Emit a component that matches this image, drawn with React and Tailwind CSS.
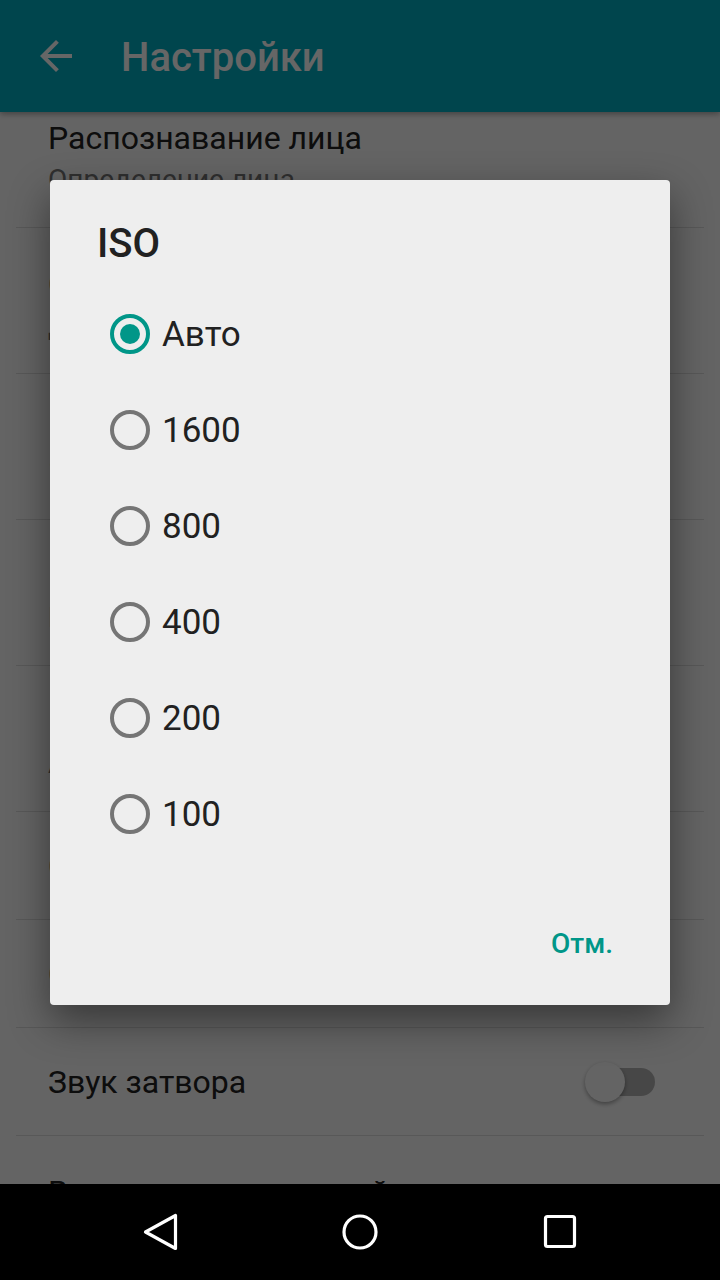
import React from "react";

function Switch() {
  return (
    <div className="relative w-[70px] h-[40px] flex items-center">
      <div className="ml-[2px] w-[68px] h-[28px] rounded-full bg-[#b2b2b2]" />
      <div className="absolute left-0 top-0 w-[40px] h-[40px] rounded-full bg-[#fafafa] shadow-[0_2px_4px_rgba(0,0,0,0.35)]" />
    </div>
  );
}

function TwoLine({ title, summary }) {
  return (
    <div className="h-[145px] pl-[48px] pr-[48px] pt-[34px] flex flex-col">
      <div className="text-[32px] leading-[44px] text-[#212121] whitespace-nowrap">{title}</div>
      <div className="text-[28px] leading-[40px] text-[#757575] whitespace-nowrap">{summary}</div>
    </div>
  );
}

function OneLine({ title }) {
  return (
    <div className="h-[107px] pl-[48px] pr-[65px] flex items-center justify-between">
      <div className="text-[32px] leading-[44px] text-[#212121] whitespace-nowrap">{title}</div>
      <Switch />
    </div>
  );
}

function Divider() {
  return <div className="mx-[16px] h-px bg-[#dcdcdc]" />;
}

function Radio({ checked }) {
  return (
    <svg width="40" height="40" viewBox="0 0 40 40">
      <circle
        cx="20"
        cy="20"
        r="18"
        fill="none"
        stroke={checked ? "#009688" : "#757575"}
        strokeWidth="4"
      />
      {checked && <circle cx="20" cy="20" r="10" fill="#009688" />}
    </svg>
  );
}

export default function App() {
  const options = ["Авто", "1600", "800", "400", "200", "100"];
  return (
    <div className="relative w-[720px] h-[1280px] overflow-hidden flex flex-col bg-[#fafafa] font-[Roboto,sans-serif]">
      {/* App bar */}
      <div className="relative z-10 h-[112px] shrink-0 bg-[#00acc1] shadow-[0_2px_6px_rgba(0,0,0,0.35)] flex items-center">
        <svg className="ml-[32px]" width="48" height="48" viewBox="0 0 24 24">
          <path
            d="M20 11H7.83l5.59-5.59L12 4l-8 8 8 8 1.41-1.41L7.83 13H20v-2z"
            fill="#ffffff"
          />
        </svg>
        <div className="ml-[41px] pt-[4px] text-[40px] leading-[48px] font-medium text-white">
          Настройки
        </div>
      </div>

      {/* Settings list */}
      <div className="flex-1 overflow-hidden">
        <div className="-mt-[30px] flex flex-col">
          <TwoLine title="Распознавание лица" summary="Определение лица" />
          <Divider />
          <TwoLine title="Сохранять местоположение" summary="Добавлять геоданные к снимкам" />
          <Divider />
          <TwoLine title="Размер фото" summary="13 Мпикс" />
          <Divider />
          <TwoLine title="Размер видео" summary="Full HD 1080p" />
          <Divider />
          <TwoLine title="ISO" summary="Авто" />
          <Divider />
          <OneLine title="Сетка" />
          <Divider />
          <OneLine title="Стабилизация" />
          <Divider />
          <OneLine title="Звук затвора" />
          <Divider />
          <TwoLine title="Восстановить настройки" summary="По умолчанию" />
        </div>
      </div>

      {/* Navigation bar */}
      <div className="h-[96px] shrink-0 bg-black flex items-center justify-center gap-[152px]">
        <svg width="48" height="48" viewBox="0 0 48 48">
          <path
            d="M9.5 24 L39.5 7.5 L39.5 40.5 Z"
            fill="none"
            stroke="#ffffff"
            strokeWidth="3.2"
            strokeLinejoin="round"
          />
        </svg>
        <svg width="48" height="48" viewBox="0 0 48 48">
          <circle cx="24" cy="24" r="16" fill="none" stroke="#ffffff" strokeWidth="3.2" />
        </svg>
        <svg width="48" height="48" viewBox="0 0 48 48">
          <rect
            x="9.5"
            y="8.5"
            width="29"
            height="30"
            rx="2"
            fill="none"
            stroke="#ffffff"
            strokeWidth="3.2"
          />
        </svg>
      </div>

      {/* Scrim + dialog */}
      <div className="absolute left-0 top-0 w-[720px] h-[1184px] z-20 bg-black/60 flex items-center justify-center">
        <div className="w-[620px] h-[825px] bg-[#eeeeee] rounded-[4px] shadow-[0_16px_40px_rgba(0,0,0,0.45)] flex flex-col">
          <div className="pt-[40px] pl-[47px] text-[40px] leading-[48px] font-medium text-[#212121]">
            ISO
          </div>
          <div className="mt-[18px] flex flex-col">
            {options.map((o, i) => (
              <div key={o} className="h-[96px] flex items-center pl-[60px]">
                <Radio checked={i === 0} />
                <span className="ml-[12px] pt-[3px] text-[35px] leading-[44px] text-[#212121]">{o}</span>
              </div>
            ))}
          </div>
          <div className="mt-auto mb-[25px] h-[72px] flex items-center justify-end pr-[57px]">
            <span className="text-[28px] leading-[36px] font-medium text-[#009688]">Отм.</span>
          </div>
        </div>
      </div>
    </div>
  );
}
